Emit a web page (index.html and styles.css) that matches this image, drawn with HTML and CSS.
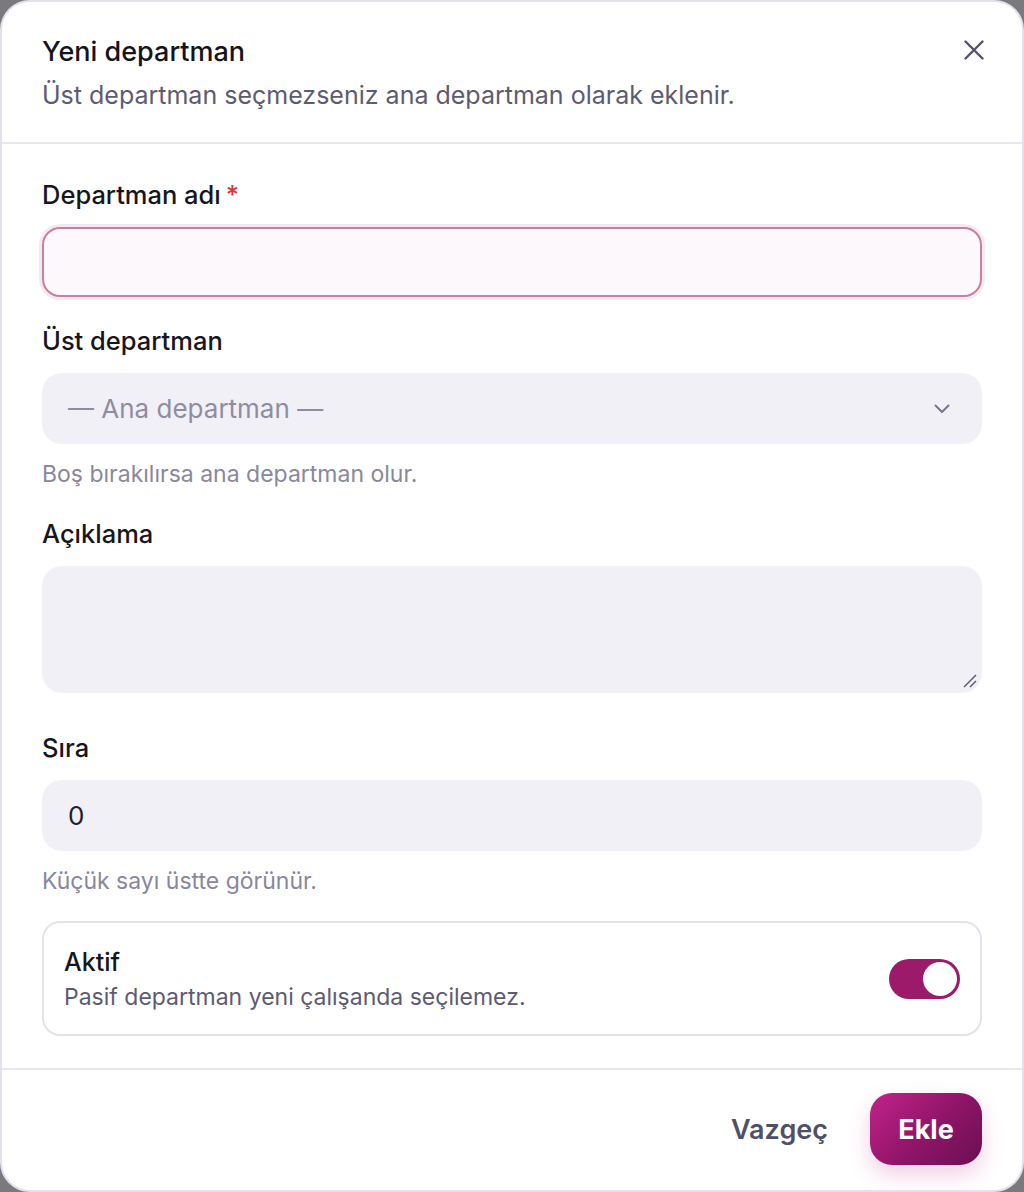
FILE: index.html
```html
<!DOCTYPE html>
<html lang="tr">
<head>
<meta charset="utf-8">
<title>Yeni departman</title>
<link rel="stylesheet" href="styles.css">
</head>
<body>
<div class="modal">
  <header class="modal-head">
    <div class="head-text">
      <h1 class="title">Yeni departman</h1>
      <p class="subtitle">Üst departman seçmezseniz ana departman olarak eklenir.</p>
    </div>
    <button class="close" aria-label="Kapat">
      <svg width="20" height="20" viewBox="0 0 20 20"><path d="M1.5 1.5 L18.5 18.5 M18.5 1.5 L1.5 18.5" stroke="#55526a" stroke-width="2.4" stroke-linecap="round" fill="none"/></svg>
    </button>
  </header>
  <main class="modal-body">
    <div class="field">
      <label class="label">Departman adı<span class="req">*</span></label>
      <div class="input input-focus"></div>
    </div>
    <div class="field">
      <label class="label">Üst departman</label>
      <div class="input select">
        <span class="placeholder">— Ana departman —</span>
        <svg class="chev" width="16" height="10" viewBox="0 0 16 10"><path d="M1.5 1.5 L8 8 L14.5 1.5" stroke="#77748a" stroke-width="2" fill="none" stroke-linecap="round" stroke-linejoin="round"/></svg>
      </div>
      <p class="help">Boş bırakılırsa ana departman olur.</p>
    </div>
    <div class="field field-tall">
      <label class="label">Açıklama</label>
      <div class="input textarea">
        <svg class="grip" width="16" height="16" viewBox="0 0 16 16"><path d="M2 14 L14 2 M8 14 L14 8" stroke="#55526a" stroke-width="1.4" fill="none"/></svg>
      </div>
    </div>
    <div class="field field-last">
      <label class="label">Sıra</label>
      <div class="input"><span class="value">0</span></div>
      <p class="help">Küçük sayı üstte görünür.</p>
    </div>
    <div class="toggle-card">
      <div class="toggle-text">
        <div class="toggle-title">Aktif</div>
        <div class="toggle-sub">Pasif departman yeni çalışanda seçilemez.</div>
      </div>
      <div class="switch"><span class="knob"></span></div>
    </div>
  </main>
  <footer class="modal-foot">
    <button class="btn-ghost">Vazgeç</button>
    <button class="btn-primary">Ekle</button>
  </footer>
</div>
</body>
</html>
```
FILE: styles.css
```css
* { box-sizing: border-box; }
html, body { margin: 0; padding: 0; }
body {
  background: #7a7a7e;
  font-family: Inter, "Noto Sans", "Liberation Sans", sans-serif;
  width: 1024px;
  height: 1192px;
}
.modal {
  width: 1024px;
  height: 1192px;
  background: #ffffff;
  border: 2px solid #e3e1ec;
  border-radius: 30px;
  display: flex;
  flex-direction: column;
  overflow: hidden;
}
.modal-head {
  display: flex;
  justify-content: space-between;
  align-items: flex-start;
  padding: 31px 38px 0 40px;
  height: 142px;
  border-bottom: 2px solid #e8e6ef;
}
.title {
  margin: 0;
  font-size: 27px;
  font-weight: 550;
  color: #15141c;
  line-height: 38px;
}
.subtitle {
  margin: 7px 0 0;
  font-size: 25px;
  color: #5d5b72;
  line-height: 34px;
}
.close {
  border: 0;
  background: none;
  padding: 0;
  margin-top: 7px;
  width: 20px;
  height: 20px;
  display: flex;
}
.modal-body {
  flex: 1;
  padding: 35px 40px 0 40px;
  display: flex;
  flex-direction: column;
}
.field { display: flex; flex-direction: column; margin-bottom: 28px; }
.field-tall { margin-bottom: 39px; }
.field-last { margin-bottom: 24px; }
.label {
  font-size: 25.5px;
  font-weight: 550;
  color: #17161d;
  line-height: 32px;
  margin-bottom: 16px;
}
.req { color: #e5342f; margin-left: 5px; }
.input {
  height: 71px;
  border-radius: 20px;
  background: #f2f0f7;
  display: flex;
  align-items: center;
  padding: 0 26px;
}
.input-focus {
  background: #fcf8fc;
  border: 2px solid #c7809f;
  box-shadow: 0 0 0 3px #f6e8f1;
  height: 70px;
  border-radius: 18px;
}
.select { justify-content: space-between; padding-right: 32px; }
.placeholder { font-size: 26px; color: #8f8ca1; }
.value { font-size: 26px; color: #22212b; }
.textarea {
  height: 127px;
  align-items: flex-end;
  justify-content: flex-end;
  padding: 0 4px 4px 0;
}
.help {
  margin: 14px 0 0;
  font-size: 23px;
  color: #8a879b;
  line-height: 32px;
}
.toggle-card {
  height: 115px;
  border: 2px solid #e4e2ea;
  border-radius: 18px;
  display: flex;
  align-items: center;
  justify-content: space-between;
  padding: 0 20px 0 20px;
}
.toggle-title {
  font-size: 25px;
  font-weight: 500;
  color: #17161d;
  line-height: 34px;
}
.toggle-sub {
  font-size: 23px;
  color: #5d5b72;
  line-height: 32px;
  margin-top: 2px;
}
.switch {
  width: 71px;
  height: 40px;
  border-radius: 20px;
  background: #9b1a69;
  display: flex;
  align-items: center;
  justify-content: flex-end;
  padding: 0 3px;
}
.knob {
  width: 34px;
  height: 34px;
  border-radius: 50%;
  background: #ffffff;
}
.modal-foot {
  height: 122px;
  border-top: 2px solid #e8e6ef;
  display: flex;
  align-items: center;
  justify-content: flex-end;
  padding: 0 40px 2px 0;
  gap: 42px;
}
.btn-ghost {
  border: 0;
  background: none;
  font-family: inherit;
  font-size: 27px;
  font-weight: 600;
  color: #514f67;
  padding: 0;
}
.btn-primary {
  border: 0;
  width: 112px;
  height: 72px;
  border-radius: 22px;
  background: linear-gradient(135deg, #c2238a 0%, #8e1467 55%, #6a0f52 100%);
  color: #ffffff;
  font-family: inherit;
  font-size: 27px;
  font-weight: 700;
  box-shadow: 0 10px 22px rgba(194, 35, 138, 0.22);
}
```
